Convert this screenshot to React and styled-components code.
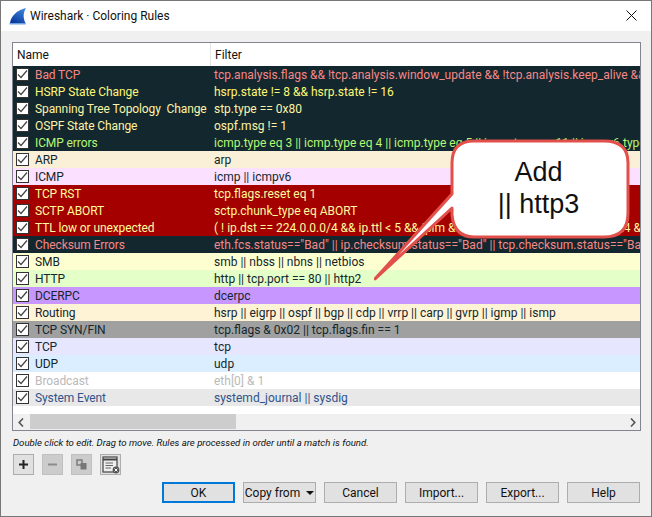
import React from "react";
import styled, { createGlobalStyle } from "styled-components";

const Global = createGlobalStyle`
  html, body { margin: 0; padding: 0; background: #fff; }
  * { box-sizing: border-box; }
`;

const Window = styled.div`
  position: relative;
  width: 652px;
  height: 517px;
  border: 1px solid #777;
  background: #f0f0f0;
  font-family: Roboto, "Noto Sans", sans-serif;
  font-size: 12px;
  color: #000;
  display: flex;
  flex-direction: column;
  overflow: hidden;
`;

const TitleBar = styled.div`
  height: 30px;
  background: #fff;
  display: flex;
  align-items: center;
  padding: 0 14px 1px 8px;
  gap: 3px;
  flex: none;
`;

const TitleText = styled.span`
  flex: 1;
  font-size: 12px;
  color: #111;
  white-space: nowrap;
`;

const Content = styled.div`
  flex: 1;
  display: flex;
  flex-direction: column;
  padding: 11px 10px 0 11px;
`;

const Table = styled.div`
  width: 629px;
  height: 389px;
  border: 1px solid #84848f;
  background: #fff;
  display: flex;
  flex-direction: column;
  overflow: hidden;
  flex: none;
`;

const Header = styled.div`
  height: 23px;
  display: grid;
  grid-template-columns: 198px 1fr;
  background: #fff;
  flex: none;
`;

const HeadCell = styled.div`
  display: flex;
  align-items: center;
  padding-left: 4px;
  border-right: ${(p) => (p.$divider ? "1px solid #e5e5e5" : "0")};
  color: #111;
`;

const Rows = styled.div`
  flex: 1;
  overflow: hidden;
`;

const Row = styled.div`
  height: 17px;
  display: grid;
  grid-template-columns: 198px 1fr;
  align-items: center;
  background: ${(p) => p.$bg};
  color: ${(p) => p.$fg};
  white-space: pre;
`;

const NameCell = styled.div`
  display: flex;
  align-items: center;
  gap: 6px;
  padding-left: 3px;
  letter-spacing: -0.1px;
  overflow: hidden;
`;

const FilterCell = styled.div`
  padding-left: 3px;
  overflow: hidden;
`;

const CheckBox = styled.span`
  width: 13px;
  height: 13px;
  flex: none;
  background: #fff;
  border: 1px solid #333;
  display: flex;
  align-items: center;
  justify-content: center;
`;

const ScrollBar = styled.div`
  margin-top: 8px;
  height: 16px;
  flex: none;
  background: #f0f0f0;
  display: flex;
  align-items: center;
  justify-content: space-between;
  position: relative;
  padding: 0 4px 0 5px;
`;

const ScrollThumb = styled.div`
  position: absolute;
  left: 17px;
  top: 0;
  width: 206px;
  height: 15px;
  background: #cdcdcd;
`;

const Hint = styled.div`
  margin-top: 5px;
  height: 14px;
  line-height: 14px;
  font-size: 9.6px;
  font-style: italic;
  padding-left: 1px;
  color: #111;
  white-space: nowrap;
`;

const Tools = styled.div`
  margin-top: 4px;
  height: 21px;
  display: flex;
  gap: 8px;
  padding-left: 1px;
  flex: none;
`;

const ToolButton = styled.div`
  width: 21px;
  height: 21px;
  display: flex;
  align-items: center;
  justify-content: center;
  background: ${(p) => (p.$disabled ? "#cccccc" : "#e1e1e1")};
  border: 1px solid ${(p) => (p.$disabled ? "#bfbfbf" : "#adadad")};
`;

const Actions = styled.div`
  margin-top: 7px;
  display: flex;
  justify-content: flex-end;
  gap: 8px;
  padding-right: 1px;
  flex: none;
`;

const Button = styled.div`
  width: 73px;
  height: 21px;
  display: flex;
  align-items: center;
  justify-content: center;
  gap: 6px;
  white-space: nowrap;
  background: #e1e1e1;
  border: ${(p) => (p.$primary ? "2px solid #0078d7" : "1px solid #adadad")};
  color: #111;
`;

const Caret = styled.span`
  width: 0;
  height: 0;
  border-left: 4px solid transparent;
  border-right: 4px solid transparent;
  border-top: 4px solid #111;
`;

const Callout = styled.div`
  position: absolute;
  left: 373px;
  top: 138px;
  width: 260px;
  height: 145px;
`;

const CalloutText = styled.div`
  position: absolute;
  left: 76px;
  top: 17px;
  width: 177px;
  text-align: center;
  font-family: "Liberation Sans", Arial, sans-serif;
  font-size: 27px;
  line-height: 32px;
  color: #111;
`;

const Check = () => (
  <svg width="11" height="11" viewBox="0 0 11 11">
    <path d="M1 5.5 L4 8.5 L10 1.5" fill="none" stroke="#444" strokeWidth="1.2" />
  </svg>
);

const dark = "#12272e";
const rows = [
  ["Bad TCP", "tcp.analysis.flags && !tcp.analysis.window_update && !tcp.analysis.keep_alive && tcp.analysis.keep_alive_ack", dark, "#f78787"],
  ["HSRP State Change", "hsrp.state != 8 && hsrp.state != 16", dark, "#fff776"],
  ["Spanning Tree Topology  Change", "stp.type == 0x80", dark, "#fff3a6"],
  ["OSPF State Change", "ospf.msg != 1", dark, "#fff3a6"],
  ["ICMP errors", "icmp.type eq 3 || icmp.type eq 4 || icmp.type eq 5 || icmp.type eq 11 || icmpv6.type eq 1 || icmpv6.type eq 2", dark, "#b7f774"],
  ["ARP", "arp", "#faf0d7", dark],
  ["ICMP", "icmp || icmpv6", "#fce0ff", dark],
  ["TCP RST", "tcp.flags.reset eq 1", "#a40000", "#fffc9c"],
  ["SCTP ABORT", "sctp.chunk_type eq ABORT", "#a40000", "#fffc9c"],
  ["TTL low or unexpected", "( ! ip.dst == 224.0.0.0/4 && ip.ttl < 5 && !pim && !ospf) || (ip.dst == 224.0.0.0/24 && ip.dst != 224.0.0.251)", "#a40000", "#fffc9c"],
  ["Checksum Errors", 'eth.fcs.status=="Bad" || ip.checksum.status=="Bad" || tcp.checksum.status=="Bad" || udp.checksum.status=="Bad"', dark, "#f78787"],
  ["SMB", "smb || nbss || nbns || netbios", "#feffd0", dark],
  ["HTTP", "http || tcp.port == 80 || http2", "#e4ffc7", dark],
  ["DCERPC", "dcerpc", "#c797ff", dark],
  ["Routing", "hsrp || eigrp || ospf || bgp || cdp || vrrp || carp || gvrp || igmp || ismp", "#fff3d6", dark],
  ["TCP SYN/FIN", "tcp.flags & 0x02 || tcp.flags.fin == 1", "#a0a0a0", dark],
  ["TCP", "tcp", "#e7e6ff", dark],
  ["UDP", "udp", "#daeeff", dark],
  ["Broadcast", "eth[0] & 1", "#ffffff", "#bababa"],
  ["System Event", "systemd_journal || sysdig", "#e8e8e8", "#30538a"],
];

const ToolIcon = ({ children }) => (
  <svg width="15" height="15" viewBox="0 0 15 15">{children}</svg>
);

export default function App() {
  return (
    <>
      <Global />
      <Window>
        <TitleBar>
          <svg width="18" height="18" viewBox="0 0 18 18">
            <defs>
              <linearGradient id="fin" x1="0.8" y1="0" x2="0.2" y2="1">
                <stop offset="0" stopColor="#3f86dc" />
                <stop offset="1" stopColor="#08379c" />
              </linearGradient>
            </defs>
            <path d="M1 16 C2 9 8 3 17 1 C14 6 14 11 16.5 16 Z" fill="url(#fin)" />
            <path d="M0.5 16 H17 L16.5 17.5 H0.5 Z" fill="#6fa3e0" />
          </svg>
          <TitleText>Wireshark · Coloring Rules</TitleText>
          <svg width="11" height="11" viewBox="0 0 11 11">
            <path d="M0.5 0.5 L10.5 10.5 M10.5 0.5 L0.5 10.5" stroke="#111" strokeWidth="1" fill="none" />
          </svg>
        </TitleBar>
        <Content>
          <Table>
            <Header>
              <HeadCell $divider>Name</HeadCell>
              <HeadCell>Filter</HeadCell>
            </Header>
            <Rows>
              {rows.map(([name, filter, bg, fg]) => (
                <Row key={name} $bg={bg} $fg={fg}>
                  <NameCell>
                    <CheckBox><Check /></CheckBox>
                    {name}
                  </NameCell>
                  <FilterCell>{filter}</FilterCell>
                </Row>
              ))}
            </Rows>
            <ScrollBar>
              <ScrollThumb />
              <svg width="6" height="9" viewBox="0 0 6 9">
                <path d="M5 0.5 L1.2 4.5 L5 8.5" fill="none" stroke="#555" strokeWidth="1.6" />
              </svg>
              <svg width="6" height="9" viewBox="0 0 6 9">
                <path d="M1 0.5 L4.8 4.5 L1 8.5" fill="none" stroke="#555" strokeWidth="1.6" />
              </svg>
            </ScrollBar>
          </Table>
          <Hint>Double click to edit. Drag to move. Rules are processed in order until a match is found.</Hint>
          <Tools>
            <ToolButton>
              <ToolIcon><path d="M7.5 3 V12 M3 7.5 H12" stroke="#222" strokeWidth="2" /></ToolIcon>
            </ToolButton>
            <ToolButton $disabled>
              <ToolIcon><path d="M3 7.5 H12" stroke="#8c8c8c" strokeWidth="2" /></ToolIcon>
            </ToolButton>
            <ToolButton $disabled>
              <ToolIcon>
                <rect x="3" y="3" width="5" height="5" fill="none" stroke="#777" strokeWidth="1.4" />
                <rect x="7" y="6.5" width="5" height="5.5" fill="#777" stroke="#777" />
              </ToolIcon>
            </ToolButton>
            <ToolButton>
              <svg width="18" height="18" viewBox="0 0 18 18">
                <rect x="1" y="1" width="14" height="15" fill="#eee" stroke="#444" strokeWidth="1.2" />
                <path d="M1 3.5 H15" stroke="#444" strokeWidth="2" />
                <path d="M3.5 7 H11 M3.5 9.5 H11 M3.5 12 H9" stroke="#666" strokeWidth="1" />
                <circle cx="14" cy="14" r="3.4" fill="#555" />
                <path d="M12.6 12.6 L15.4 15.4 M15.4 12.6 L12.6 15.4" stroke="#fff" strokeWidth="1" />
              </svg>
            </ToolButton>
          </Tools>
          <Actions>
            <Button $primary>OK</Button>
            <Button>Copy from <Caret /></Button>
            <Button>Cancel</Button>
            <Button>Import...</Button>
            <Button>Export...</Button>
            <Button>Help</Button>
          </Actions>
        </Content>
        <Callout>
          <svg width="260" height="145" viewBox="0 0 260 145">
            <path
              d="M100 2 H230 Q254 2 254 24 V74 Q254 98 230 98 H100 Q80 98 78 76 L78 69 L1 140 L78 55 V24 Q78 2 100 2 Z"
              fill="#fff"
              stroke="#e2504c"
              strokeWidth="3"
              strokeLinejoin="round"
            />
          </svg>
          <CalloutText>Add<br />|| http3</CalloutText>
        </Callout>
      </Window>
    </>
  );
}
